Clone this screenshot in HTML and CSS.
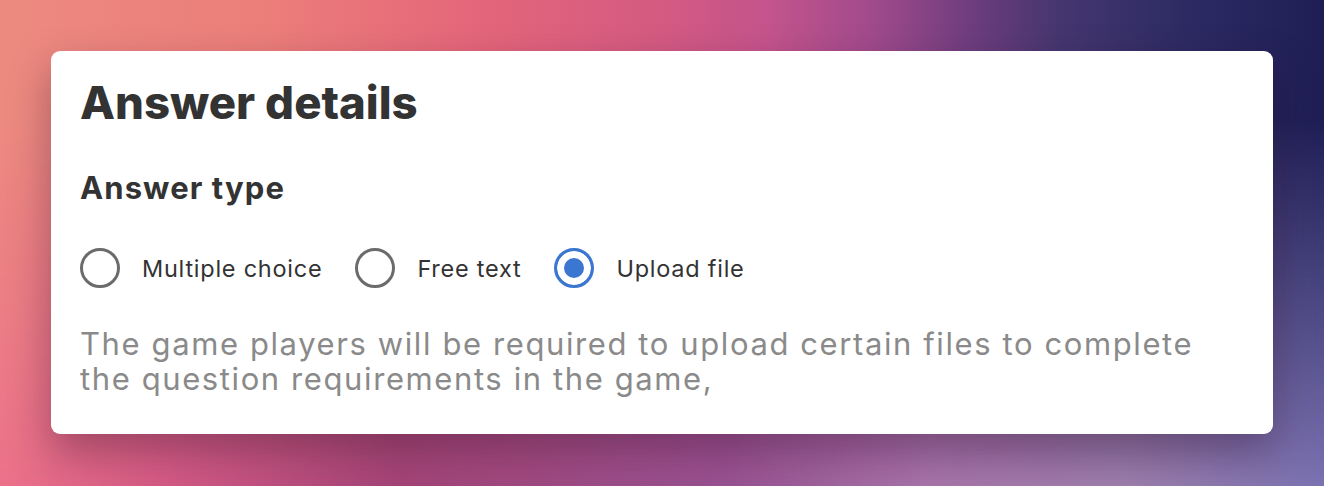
FILE: index.html
```html
<!DOCTYPE html>
<html lang="en">
  <head>
    <meta charset="UTF-8" />
    <meta name="viewport" content="width=device-width, initial-scale=1.0" />
    <title>Answer details</title>
    <link rel="stylesheet" href="styles.css">
  </head>
  <body>
    <div class="backdrop"></div>
    <div class="page">
      <div class="card">
        <h1>Answer details</h1>
        <h2>Answer type</h2>
        <div class="options">
          <label class="option">
            <span class="radio"></span>
            <span class="option-text">Multiple choice</span>
          </label>
          <label class="option">
            <span class="radio"></span>
            <span class="option-text">Free text</span>
          </label>
          <label class="option">
            <span class="radio checked"></span>
            <span class="option-text">Upload file</span>
          </label>
        </div>
        <p class="hint">
          The game players will be required to upload certain files to complete
          the question requirements in the game,
        </p>
      </div>
    </div>
  </body>
</html>
```

FILE: styles.css
```css
html,
body {
  margin: 0;
  height: 100%;
}
body {
  font-family: Inter, "Noto Sans", sans-serif;
  background: linear-gradient(
    to right,
    #ec728a 0%,
    #d65a86 12%,
    #a44478 30%,
    #985292 55%,
    #a874aa 70%,
    #9e7eac 85%,
    #7a72b2 100%
  );
  position: relative;
  overflow: hidden;
}
/* top half of the colour wash, faded out towards the bottom */
.backdrop {
  position: absolute;
  inset: 0;
  background: linear-gradient(
    to right,
    #ec8a80 0%,
    #ec7e7a 20%,
    #e4667a 36%,
    #d45a82 50%,
    #c4548c 58%,
    #a04a8c 66%,
    #6a3c7c 74%,
    #453670 80%,
    #2c2a62 90%,
    #1e1e55 100%
  );
  -webkit-mask-image: linear-gradient(to bottom, #000 0%, #000 25%, transparent 100%);
  mask-image: linear-gradient(to bottom, #000 0%, #000 25%, transparent 100%);
}
.page {
  position: relative;
  padding: 51px 51px 0;
}
.card {
  background: #fff;
  border-radius: 9px;
  box-shadow: 0 18px 40px rgba(40, 10, 40, 0.35);
  padding: 26px 29px 0;
  height: 383px;
  box-sizing: border-box;
  color: #333;
}
h1 {
  margin: 0;
  font-size: 45.5px;
  line-height: 52px;
  font-weight: 800;
}
h2 {
  margin: 40px 0 0;
  font-size: 31px;
  line-height: 38px;
  font-weight: 700;
  letter-spacing: 1.1px;
}
.options {
  display: flex;
  align-items: center;
  gap: 33px;
  margin-top: 41px;
}
.option {
  display: flex;
  align-items: center;
  gap: 22px;
}
.radio {
  width: 40px;
  height: 40px;
  box-sizing: border-box;
  border: 3px solid #6b6b6b;
  border-radius: 50%;
}
.radio.checked {
  border-color: #3b77d0;
  background: #3b77d0;
  box-shadow: inset 0 0 0 7px #fff;
}
.option-text {
  font-size: 23.5px;
  letter-spacing: 0.75px;
  color: #333;
}
.hint {
  max-width: 1150px;
  margin: 39px 0 0;
  font-size: 31px;
  line-height: 34.5px;
  letter-spacing: 1.6px;
  color: #8a8a8a;
}
```
